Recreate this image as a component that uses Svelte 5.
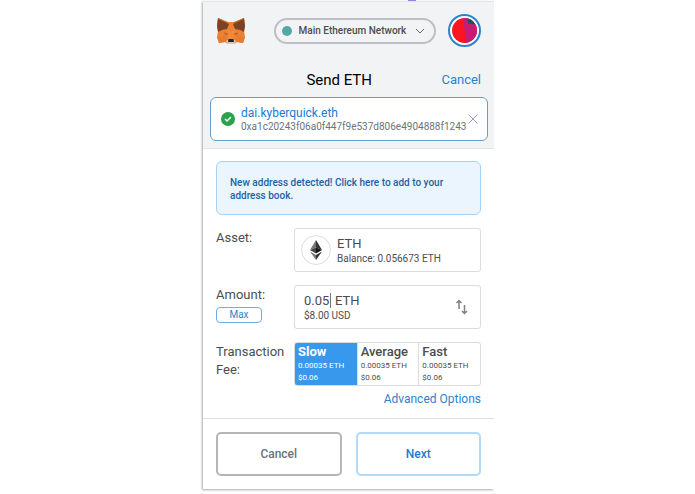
<script lang="ts">
	const fees = [
		{ name: 'Slow', eth: '0.00035 ETH', usd: '$0.06' },
		{ name: 'Average', eth: '0.00035 ETH', usd: '$0.06' },
		{ name: 'Fast', eth: '0.00035 ETH', usd: '$0.06' }
	];

	let selectedFee = $state('Slow');
	let amount = $state('0.05');
	let network = $state('Main Ethereum Network');
</script>

<svelte:head>
	<title>Send ETH</title>
</svelte:head>

<div class="page">
	<span class="marker"></span>
	<main class="popup">
		<header>
			<div class="app-bar">
				<svg class="fox" viewBox="0 0 28 26" aria-hidden="true">
					<path d="M1 0 10 4H18L27 0 28 8 27 13 28 19 26 25 20 24 17 26H11L8 24 2 25 0 19 1 13 0 8Z" fill="#ec8034" />
					<path d="M1 0 12 6 10 11 5 12 1 14 0 8Z" fill="#7b4324" />
					<path d="M27 0 16 6 18 11 23 12 27 14 28 8Z" fill="#7b4324" />
					<path d="M1 0 11 4 12 6 1 1ZM27 0 17 4 16 6 27 1Z" fill="#c4672f" />
					<path d="M10 11 14 14 18 11 17 21H11Z" fill="#f28a3a" />
					<path d="M0 19 8 18 10 22 8 24 2 25ZM28 19 20 18 18 22 20 24 26 25Z" fill="#e87a2d" />
					<path d="M7 14.500 11 15.500 10.500 17 8 16.500ZM21 14.500 17 15.500 17.500 17 20 16.500Z" fill="#b4603a" />
					<path d="M9 23 12 21H16L19 23 17 26H11Z" fill="#d9c5b9" />
					<path d="M11.500 21H16.500L17 24H11Z" fill="#20252b" />
				</svg>
				<div class="network">
					<span class="dot"></span>
					<select bind:value={network} aria-label="Network">
						<option>Main Ethereum Network</option>
					</select>
					<svg class="chevron" viewBox="0 0 10 6" aria-hidden="true">
						<path d="M1 1 5 5 9 1" />
					</svg>
				</div>
				<button class="account" aria-label="Account">
					<svg viewBox="0 0 26 26" aria-hidden="true">
						<clipPath id="round"><circle cx="13" cy="13" r="13" /></clipPath>
						<g clip-path="url(#round)">
							<path d="M0 0H26V26H0Z" fill="#fb1521" />
							<path d="M12 0H26V26H14Z" fill="#c81b74" />
							<path d="M16 0H26V7L17 6Z" fill="#1c5458" />
						</g>
					</svg>
				</button>
			</div>

			<div class="title-bar">
				<h1>Send ETH</h1>
				<a href="#cancel">Cancel</a>
			</div>

			<div class="recipient">
				<svg class="check" viewBox="0 0 14 14" aria-hidden="true">
					<circle cx="7" cy="7" r="7" fill="#2aa24a" />
					<path d="M4 7 6 9 10 5" />
				</svg>
				<div class="recipient-text">
					<div class="ens">dai.kyberquick.eth</div>
					<div class="address">0xa1c20243f06a0f447f9e537d806e4904888f1243</div>
				</div>
				<button class="clear" aria-label="Remove recipient">
					<svg viewBox="0 0 10 10" aria-hidden="true"><path d="M0.5 0.5 9.5 9.5M9.5 0.5 0.5 9.5" /></svg>
				</button>
			</div>
		</header>

		<section class="form">
			<button class="notice">New address detected! Click here to add to your address book.</button>

			<div class="row">
				<div class="label">Asset:</div>
				<div class="field asset">
					<span class="token">
						<svg viewBox="0 0 12 20" aria-hidden="true">
							<path d="M6 0 0 10 6 7.5Z" fill="#777" />
							<path d="M6 0 12 10 6 7.5Z" fill="#333" />
							<path d="M0 10 6 7.5V13.5Z" fill="#444" />
							<path d="M12 10 6 7.5V13.5Z" fill="#151515" />
							<path d="M0 11.5 6 15V20Z" fill="#777" />
							<path d="M12 11.5 6 15V20Z" fill="#333" />
						</svg>
					</span>
					<div>
						<div class="primary">ETH</div>
						<div class="secondary">Balance: 0.056673 ETH</div>
					</div>
				</div>
			</div>

			<div class="row">
				<div class="label">
					<label for="amount">Amount:</label>
					<button class="max">Max</button>
				</div>
				<div class="field amount">
					<div>
						<div class="primary entry">
							<input id="amount" type="text" inputmode="decimal" bind:value={amount} />
							<span>ETH</span>
						</div>
						<div class="secondary">$8.00 USD</div>
					</div>
					<button class="swap" aria-label="Switch currency">
						<svg viewBox="0 0 12 16" aria-hidden="true">
							<path d="M3 10V2M0.5 4 3 1.5 5.5 4M8.5 6V14M6 12 8.5 14.5 11 12" />
						</svg>
					</button>
				</div>
			</div>

			<div class="row">
				<div class="label">Transaction Fee:</div>
				<div class="fees">
					{#each fees as fee (fee.name)}
						<button
							class="fee"
							class:selected={selectedFee === fee.name}
							aria-pressed={selectedFee === fee.name}
							onclick={() => (selectedFee = fee.name)}
						>
							<span class="fee-name">{fee.name}</span>
							<span>{fee.eth}</span>
							<span>{fee.usd}</span>
						</button>
					{/each}
				</div>
			</div>

			<a class="advanced" href="#advanced">Advanced Options</a>
		</section>

		<footer>
			<button class="action">Cancel</button>
			<button class="action next">Next</button>
		</footer>
	</main>
</div>

<style>
	:global(body) {
		background: #fff;
		font-family: Roboto, 'Liberation Sans', sans-serif;
		color: #4d4d4d;
	}

	* {
		box-sizing: border-box;
	}

	button,
	input,
	select {
		font: inherit;
		color: inherit;
		margin: 0;
		padding: 0;
		border: none;
		background: none;
		outline: none;
	}

	svg {
		display: block;
		fill: none;
	}

	a {
		color: #2b83cd;
		text-decoration: none;
	}

	.page {
		position: relative;
		padding: 1px 0 4px 2px;
	}

	.marker {
		position: absolute;
		top: 0;
		left: calc(50% + 60px);
		width: 8px;
		height: 1px;
		background: #9a7fe0;
	}

	.popup {
		max-width: 291px;
		margin: 0 auto;
		border-top: 1px solid #e3e5e7;
		background: #fff;
		box-shadow: -1px 1px 2px #aaa;
		clip-path: inset(-1px 0 -4px -4px);
	}

	header {
		padding: 12px 6px 7px 7px;
		background: #f2f3f4;
		border-bottom: 1px solid #e2e4e6;
	}

	.app-bar {
		display: flex;
		align-items: center;
		justify-content: space-between;
		padding: 0 7px;
	}

	.fox {
		width: 28px;
		height: 26px;
	}

	.network {
		display: flex;
		align-items: center;
		gap: 7px;
		width: 162px;
		height: 26px;
		margin-left: 16px;
		padding: 0 9px 0 6px;
		border: 2px solid #bbc0c5;
		border-radius: 13px;
	}

	.dot {
		width: 10px;
		height: 10px;
		border-radius: 50%;
		background: #55a9a5;
	}

	select {
		flex: 1;
		min-width: 0;
		appearance: none;
		font-size: 10px;
		font-weight: 500;
	}

	.chevron {
		width: 10px;
		height: 6px;
		stroke: #666;
	}

	.account {
		width: 33px;
		height: 33px;
		padding: 2px;
		border: 2px solid #2b83cd;
		border-radius: 50%;
		background: #fff;
	}

	.title-bar {
		display: grid;
		grid-template-columns: 20px 1fr auto;
		align-items: center;
		padding: 23px 7px 7px;
		line-height: 20px;
		font-size: 13px;
	}

	h1 {
		grid-column: 2;
		margin: 0;
		text-align: center;
		font-size: 15px;
		font-weight: 400;
		color: #000;
	}

	.recipient {
		display: flex;
		align-items: center;
		height: 44px;
		padding: 0 9px 0 10px;
		border: 1px solid #5f9fd4;
		border-radius: 6px;
		background: #fff;
	}

	.check {
		width: 14px;
		height: 14px;
	}

	.check path {
		stroke: #fff;
		stroke-width: 1.5;
	}

	.recipient-text {
		flex: 1;
		min-width: 0;
		margin-left: 6px;
		padding-top: 2px;
	}

	.ens {
		overflow: hidden;
		line-height: 13px;
		font-size: 12px;
		color: #1c7ad1;
	}

	.address {
		line-height: 13px;
		font-size: 10px;
		color: #6a737d;
	}

	.clear svg {
		width: 10px;
		height: 10px;
		stroke: #9aa0a6;
	}

	.form {
		display: flex;
		flex-direction: column;
		gap: 13px;
		padding: 12px 13px;
	}

	.notice {
		padding: 14px 13px 12px;
		border: 1px solid #a5d2f6;
		border-radius: 6px;
		background: #eaf5fe;
		text-align: left;
		font-size: 10px;
		font-weight: 500;
		line-height: 13px;
		color: #1f62a3;
	}

	.row {
		display: grid;
		grid-template-columns: 78px 1fr;
	}

	.label {
		display: flex;
		flex-direction: column;
		align-items: flex-start;
		padding-top: 1px;
		font-size: 13px;
		line-height: 18px;
	}

	.max {
		width: 46px;
		height: 16px;
		margin-top: 3px;
		border: 1px solid #6aaee6;
		border-radius: 4px;
		font-size: 10px;
		line-height: 14px;
		color: #2b83cd;
	}

	.field {
		display: flex;
		align-items: center;
		height: 44px;
		border: 1px solid #dcdcdc;
		border-radius: 3px;
	}

	.asset {
		gap: 6px;
		padding: 0 6px;
	}

	.token {
		display: flex;
		align-items: center;
		justify-content: center;
		width: 30px;
		height: 30px;
		border: 1px solid #ddd;
		border-radius: 50%;
	}

	.token svg {
		width: 12px;
		height: 20px;
	}

	.amount {
		justify-content: space-between;
		padding: 0 12px 0 9px;
	}

	.primary {
		font-size: 13px;
		line-height: 16px;
	}

	.secondary {
		font-size: 10px;
		line-height: 13px;
	}

	.entry {
		display: flex;
		align-items: center;
		gap: 4px;
	}

	/* the right border stands in for the text caret */
	.entry input {
		width: 27px;
		height: 15px;
		border-right: 1px solid #777;
	}

	.swap svg {
		width: 12px;
		height: 16px;
		stroke: #808080;
		stroke-width: 1.5;
	}

	.fees {
		display: grid;
		grid-template-columns: repeat(3, 1fr);
		height: 44px;
		border: 1px solid #dcdcdc;
		border-radius: 3px;
		overflow: hidden;
	}

	.fee {
		display: flex;
		flex-direction: column;
		padding: 1px 3px 0;
		border-left: 1px solid #dcdcdc;
		text-align: left;
		font-size: 8px;
		line-height: 12px;
		white-space: nowrap;
	}

	.fee:first-child {
		border-left: none;
	}

	.fee.selected {
		background: #3898ec;
		color: #fff;
	}

	.fee-name {
		font-size: 13px;
		font-weight: 500;
		line-height: 16px;
	}

	.selected .fee-name {
		font-weight: 700;
	}

	.advanced {
		align-self: flex-end;
		margin-top: -7px;
		font-size: 12px;
		line-height: 14px;
	}

	footer {
		display: grid;
		grid-template-columns: 1fr 1fr;
		gap: 14px;
		padding: 13px;
		border-top: 1px solid #dcdfe2;
	}

	.action {
		height: 44px;
		border: 2px solid #b4b6b9;
		border-radius: 5px;
		font-size: 12px;
		font-weight: 500;
		color: #6a737d;
	}

	.next {
		border-color: #b3daf7;
		color: #1c7ad1;
	}
</style>
